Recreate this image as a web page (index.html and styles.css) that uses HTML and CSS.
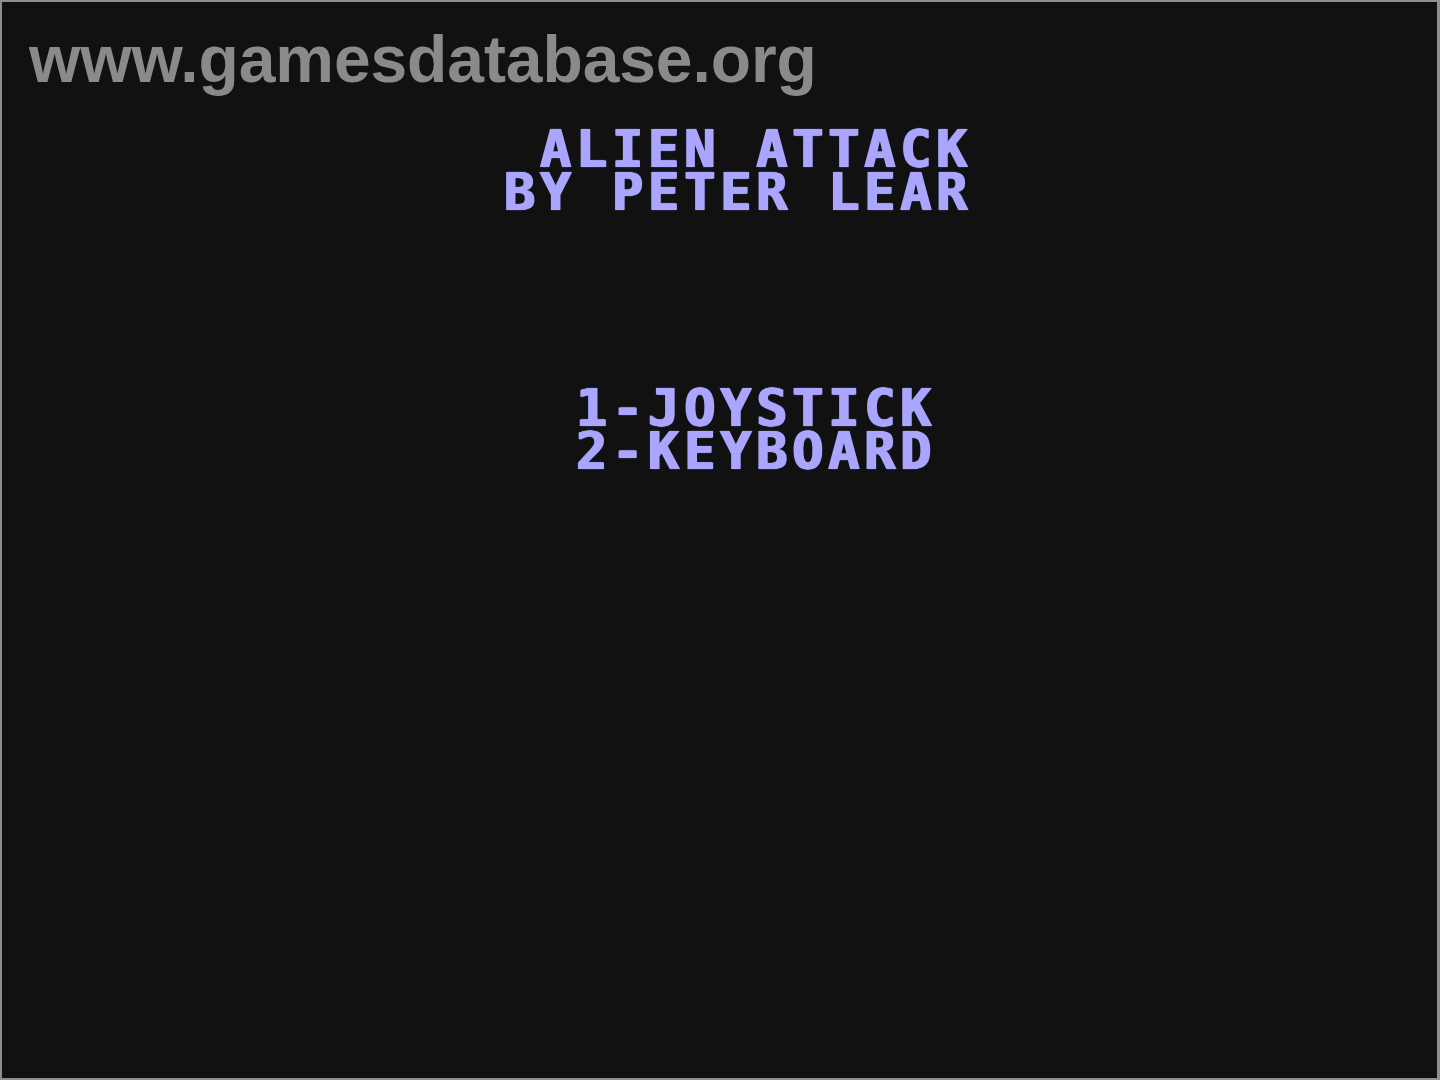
FILE: index.html
```html
<!DOCTYPE html>
<html lang="en">
<head>
<meta charset="utf-8">
<title>Alien Attack</title>
<link rel="stylesheet" href="styles.css">
</head>
<body>
<div class="frame">
  <div class="watermark">www.gamesdatabase.org</div>
  <pre class="screen">



               ALIEN ATTACK
              BY PETER LEAR




                1-JOYSTICK
                2-KEYBOARD</pre>
</div>
</body>
</html>
```

FILE: styles.css
```css
html, body {
  margin: 0;
  padding: 0;
  background: #111111;
}

.frame {
  position: relative;
  width: 1440px;
  height: 1080px;
  box-sizing: border-box;
  border: 2px solid #8e8e8e;
  border-right-width: 3px;
  background: #111111;
  overflow: hidden;
}

.watermark {
  position: absolute;
  left: 27px;
  top: 19px;
  font-family: "Liberation Sans", Arial, sans-serif;
  font-weight: bold;
  font-size: 66px;
  line-height: 76px;
  letter-spacing: -0.1px;
  color: #8a8a8a;
  white-space: nowrap;
}

.screen {
  margin: -4px 0 0 -2px;
  padding: 0;
  font-family: "DejaVu Sans Mono", monospace;
  font-weight: bold;
  font-size: 52px;
  line-height: 43.2px;
  letter-spacing: 4.7px;
  color: #aaa6ff;
  text-shadow: 1px 0 0 #aaa6ff, -1px 0 0 #aaa6ff, 0 0 2px rgba(170, 166, 255, 0.5);
}
```
